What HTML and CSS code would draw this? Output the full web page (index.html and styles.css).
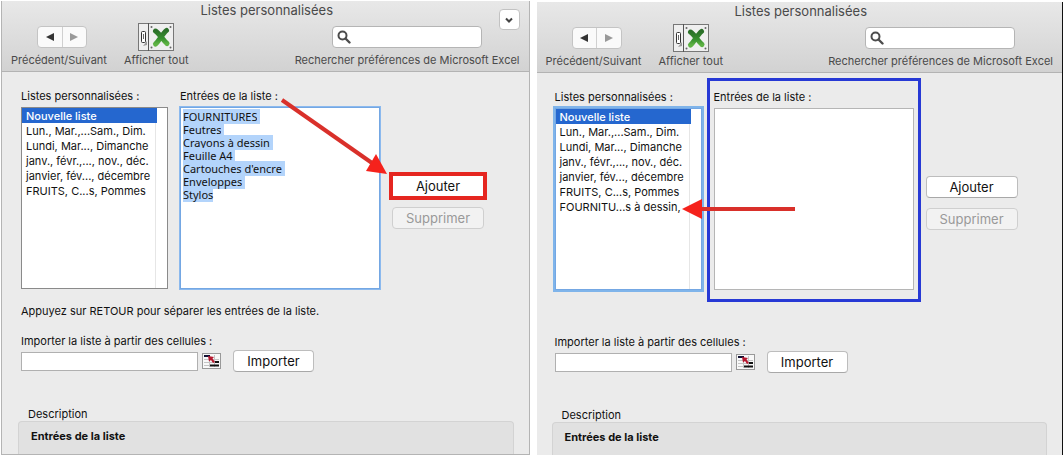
FILE: index.html
```
<!DOCTYPE html>
<html lang="fr">
<head>
<meta charset="utf-8">
<title>Listes personnalisées</title>
<link rel="stylesheet" href="styles.css">
</head>
<body>
<svg class="defs" aria-hidden="true">
  <defs>
    <linearGradient id="green" x1="0" y1="0" x2="0" y2="1"><stop offset="0" stop-color="#2b6f29"/><stop offset=".6" stop-color="#37902f"/><stop offset="1" stop-color="#5fb344"/></linearGradient>
  </defs>
  <symbol id="show-all" viewBox="0 0 36 28">
    <rect x=".5" y=".5" width="35" height="27" fill="#efefef" stroke="#777"/>
    <path d="M10.500 0V28" stroke="#555"/>
    <rect x="3.500" y="8.500" width="4" height="11" rx="1" fill="#fff" stroke="#333"/>
    <path d="M5.500 11V16" stroke="#666"/><path d="M5 23l4-5v4z" fill="#999"/>
    <path d="M17.500 8C21 10 25 17 29 20.500M28.500 7.500C25 10 21 18 17.500 21" fill="none" stroke="url(#green)" stroke-width="5" stroke-linecap="round"/>
    <g fill="#666"><circle cx="13.500" cy="4" r="1"/><circle cx="32.500" cy="4" r="1"/><circle cx="13.500" cy="24.500" r="1"/><circle cx="32.500" cy="24.500" r="1"/></g>
  </symbol>
  <symbol id="search" viewBox="0 0 14 14">
    <circle cx="5.500" cy="5.500" r="4" fill="none" stroke="#4c4c4c" stroke-width="2"/><path d="M8.500 8.500l4 4" stroke="#4c4c4c" stroke-width="2.400" stroke-linecap="round"/>
  </symbol>
  <symbol id="range" viewBox="0 0 19 16">
    <rect x=".5" y=".5" width="18" height="15" fill="#f8f8f8" stroke="#999"/>
    <path d="M2 6.500H17M2 9.500H17M2 12.500H17M7.500 2V14M12.500 2V14" stroke="#c4c4c4"/>
    <path d="M2 3H8" stroke="#113" stroke-width="2"/><path d="M8 12.500H17M13 9H17" stroke="#111" stroke-width="2"/>
    <path d="M6 3L12 4L10.500 5.500L13 9L11 10L9 7L7 8.500Z" fill="#b5182f"/>
  </symbol>
</svg>

<main class="windows">
  <section class="window first">
    <header class="header">
      <h1 class="title">Listes personnalisées</h1>
      <div class="toolbar">
        <div class="tool">
          <div class="nav"><button type="button" aria-label="Précédent"><svg viewBox="0 0 8 8"><path d="M8 0V8L0 4Z"/></svg></button><button type="button" aria-label="Suivant" disabled><svg viewBox="0 0 8 8"><path d="M0 0V8L8 4Z"/></svg></button></div>
          <span>Précédent/Suivant</span>
        </div>
        <button class="tool show" type="button"><svg class="show-icon"><use href="#show-all"/></svg><span>Afficher tout</span></button>
        <div class="tool finder">
          <div class="search"><svg><use href="#search"/></svg><input id="search1" type="search"></div>
          <label for="search1">Rechercher préférences de Microsoft Excel</label>
        </div>
      </div>
      <button class="collapse" type="button" aria-label="Réduire"><svg viewBox="0 0 8 6"><path d="M1 1.500L4 4.500L7 1.500"/></svg></button>
    </header>
    <div class="body">
      <div class="lists">
        <div class="field names">
          <label for="names1">Listes personnalisées :</label>
          <select id="names1" size="12">
            <option selected>Nouvelle liste</option>
            <option>Lun., Mar.,...Sam., Dim.</option>
            <option>Lundi, Mar..., Dimanche</option>
            <option>janv., févr.,..., nov., déc.</option>
            <option>janvier, fév..., décembre</option>
            <option>FRUITS, C...s, Pommes</option>
          </select>
        </div>
        <div class="field entries">
          <label for="entries1">Entrées de la liste :</label>
          <textarea id="entries1" class="active" spellcheck="false">FOURNITURES
Feutres
Crayons à dessin
Feuille A4
Cartouches d'encre
Enveloppes
Stylos</textarea>
        </div>
        <div class="actions">
          <button class="button marked" type="button">Ajouter</button>
          <button class="button" type="button" disabled>Supprimer</button>
        </div>
      </div>
      <p class="note">Appuyez sur RETOUR pour séparer les entrées de la liste.</p>
      <div class="import">
        <label for="import1">Importer la liste à partir des cellules :</label>
        <div class="import-row">
          <input id="import1" type="text">
          <button class="range" type="button" aria-label="Choisir des cellules"><svg><use href="#range"/></svg></button>
          <button class="button" type="button">Importer</button>
        </div>
      </div>
      <h2 class="caption">Description</h2>
      <div class="description">Entrées de la liste</div>
      <svg class="arrow diagonal" viewBox="0 0 108 80" aria-hidden="true"><path d="M2 3L92 66" stroke="#d9302a" stroke-width="4"/><path d="M107 77L96 57L86 74Z" fill="#f5221c"/></svg>
    </div>
  </section>

  <section class="window second">
    <header class="header">
      <h1 class="title">Listes personnalisées</h1>
      <div class="toolbar">
        <div class="tool">
          <div class="nav"><button type="button" aria-label="Précédent"><svg viewBox="0 0 8 8"><path d="M8 0V8L0 4Z"/></svg></button><button type="button" aria-label="Suivant" disabled><svg viewBox="0 0 8 8"><path d="M0 0V8L8 4Z"/></svg></button></div>
          <span>Précédent/Suivant</span>
        </div>
        <button class="tool show" type="button"><svg class="show-icon"><use href="#show-all"/></svg><span>Afficher tout</span></button>
        <div class="tool finder">
          <div class="search"><svg><use href="#search"/></svg><input id="search2" type="search"></div>
          <label for="search2">Rechercher préférences de Microsoft Excel</label>
        </div>
      </div>
    </header>
    <div class="body">
      <div class="lists">
        <div class="field names">
          <label for="names2">Listes personnalisées :</label>
          <select id="names2" class="active" size="12">
            <option selected>Nouvelle liste</option>
            <option>Lun., Mar.,...Sam., Dim.</option>
            <option>Lundi, Mar..., Dimanche</option>
            <option>janv., févr.,..., nov., déc.</option>
            <option>janvier, fév..., décembre</option>
            <option>FRUITS, C...s, Pommes</option>
            <option>FOURNITU...s à dessin,</option>
          </select>
        </div>
        <div class="field entries framed">
          <label for="entries2">Entrées de la liste :</label>
          <textarea id="entries2" spellcheck="false"></textarea>
        </div>
        <div class="actions">
          <button class="button" type="button">Ajouter</button>
          <button class="button" type="button" disabled>Supprimer</button>
        </div>
      </div>
      <div class="import">
        <label for="import2">Importer la liste à partir des cellules :</label>
        <div class="import-row">
          <input id="import2" type="text">
          <button class="range" type="button" aria-label="Choisir des cellules"><svg><use href="#range"/></svg></button>
          <button class="button" type="button">Importer</button>
        </div>
      </div>
      <h2 class="caption">Description</h2>
      <div class="description">Entrées de la liste</div>
      <svg class="arrow level" viewBox="0 0 114 20" aria-hidden="true"><path d="M18 10H113" stroke="#d9302a" stroke-width="4"/><path d="M0 10L20 0V20Z" fill="#f5221c"/></svg>
    </div>
  </section>
</main>
<script src="script.js"></script>
</body>
</html>
```
FILE: styles.css
```
* { box-sizing: border-box; }
body { margin: 0; background: #fff; color: #111; font: 11px/14px Inter, "Liberation Sans", sans-serif; }
button, input, select, textarea { margin: 0; font: inherit; color: inherit; border-radius: 0; }
button { padding: 0; border: 0; background: none; }
input:focus, select:focus, textarea:focus { outline: none; }
h1, h2, p { margin: 0; font: inherit; }
label { display: block; white-space: nowrap; }
svg { display: block; }
.defs { position: absolute; width: 0; height: 0; }

.windows { display: flex; gap: 7px; min-height: 100vh; }
.window { display: flex; flex-direction: column; background: #ebebeb; }
.first { flex: 528 1 0; margin: 1px 0 0 1px; border: 1px solid #b4b4b4; border-top: 0; }
.second { flex: 527 1 0; margin-top: 2px; border-right: 1px solid #111; }

.header { position: relative; height: 71px; border-bottom: 1px solid #b3b3b3; background: linear-gradient(#e8e8e8, #d2d2d2); color: #4a4a4a; }
.title { padding: 1px 0 0 3px; font-size: 13px; line-height: 16px; text-align: center; }
.toolbar { display: flex; align-items: flex-end; padding: 5px 9px 0; }
.tool { display: flex; flex-direction: column; line-height: 16px; font-size: 11px; white-space: nowrap; }
.nav { display: flex; width: 50px; height: 22px; margin: 0 0 4px 26px; border: 1px solid #c4c4c4; border-radius: 4px; background: #fafafa; }
.nav button { display: flex; flex: 1; align-items: center; justify-content: center; }
.nav button + button { border-left: 1px solid #d0d0d0; }
.nav svg { width: 8px; height: 8px; fill: #333; }
.nav button:disabled svg { fill: #999; }
.show { align-items: center; margin-left: 17px; }
.show-icon { width: 36px; height: 28px; margin-bottom: 1px; }
.finder { align-items: flex-end; margin-left: auto; }
.search { display: flex; align-items: center; width: 150px; height: 22px; margin: 0 38px 4px 0; padding: 0 4px; border: 1px solid #b5b5b5; border-radius: 4px; background: #fff; }
.search svg { width: 14px; height: 14px; flex: none; }
.search input { width: 100%; min-width: 0; border: 0; background: none; }
.collapse { position: absolute; top: 8px; right: 9px; display: flex; align-items: center; justify-content: center; width: 21px; height: 21px; border: 1px solid #c2c2c2; border-radius: 4px; background: #fff; }
.collapse svg { width: 8px; height: 6px; fill: none; stroke: #444; stroke-width: 2; }

.body { position: relative; display: flex; flex: 1; flex-direction: column; padding: 17px 15px 0 19px; }
.second .body { padding-left: 18px; }
.lists { display: flex; gap: 12px; }
.field label { margin-bottom: 4px; }
.names { width: 147px; }
.entries { position: relative; width: 200px; }
.names select { display: block; width: 100%; height: 182px; padding: 0 10px 0 0; border: 1px solid #8a8a8a; background: linear-gradient(#e6e6e6, #e6e6e6) right 11px top / 1px 100% no-repeat #fff; overflow: hidden; }
.names option { min-height: 15px; padding: 1px 4px 0; line-height: 14px; }
.names option:checked { background: linear-gradient(#2567cf, #2567cf); color: #fff; font-weight: 500; -webkit-text-fill-color: #fff; }
.entries textarea { display: block; width: 100%; height: 182px; padding: 2px; border: 1px solid #b5b5b5; background: #fff; font: 11px/13px "Noto Sans", "DejaVu Sans", sans-serif; resize: none; }
.entries textarea::selection { background: #b3d4fb; color: #111; }
.field .active { border-color: #74a7e3; box-shadow: 0 0 0 1px #8bb9ee; }
.names .active { box-shadow: 0 0 0 2px #7fb4ea; }
.framed::after { content: ""; position: absolute; inset: -12px -7px; border: 3px solid #2739d5; pointer-events: none; }
.actions { display: flex; flex-direction: column; gap: 10px; width: 92px; padding-top: 86px; }
.button { height: 22px; border: 1px solid #bdbdbd; border-bottom-color: #a8a8a8; border-radius: 4px; background: #fff; font-size: 13px; line-height: 18px; }
.button:disabled { border-color: #cfcfcf; background: #f2f2f2; color: #999; }
.marked { outline: 4px solid #e52620; outline-offset: -1px; border-radius: 0; }
.note { margin-top: 15px; }
.import { margin-top: 16px; }
.second .import { margin-top: 45px; }
.import label { margin-bottom: 2px; }
.import-row { display: flex; align-items: center; }
.import-row input { width: 177px; height: 19px; border: 1px solid #b0b0b0; background: #fff; }
.range { width: 19px; height: 16px; margin: 0 12px 0 4px; }
.range svg { width: 19px; height: 16px; }
.import-row .button { width: 81px; }
.caption { margin: 35px 0 0 7px; }
.description { flex: 1; min-height: 30px; margin-left: -3px; padding: 7px 12px 0; border: 1px solid #d3d3d3; border-bottom: 0; border-radius: 4px 4px 0 0; background: #e1e1e1; font-weight: 700; }
.arrow { position: absolute; pointer-events: none; }
.diagonal { top: 25px; left: 278px; width: 108px; height: 80px; }
.level { top: 126px; left: 145px; width: 114px; height: 20px; }
```
FILE: script.js
```
const entries = document.getElementById("entries1");
entries.focus();
entries.select();
```
